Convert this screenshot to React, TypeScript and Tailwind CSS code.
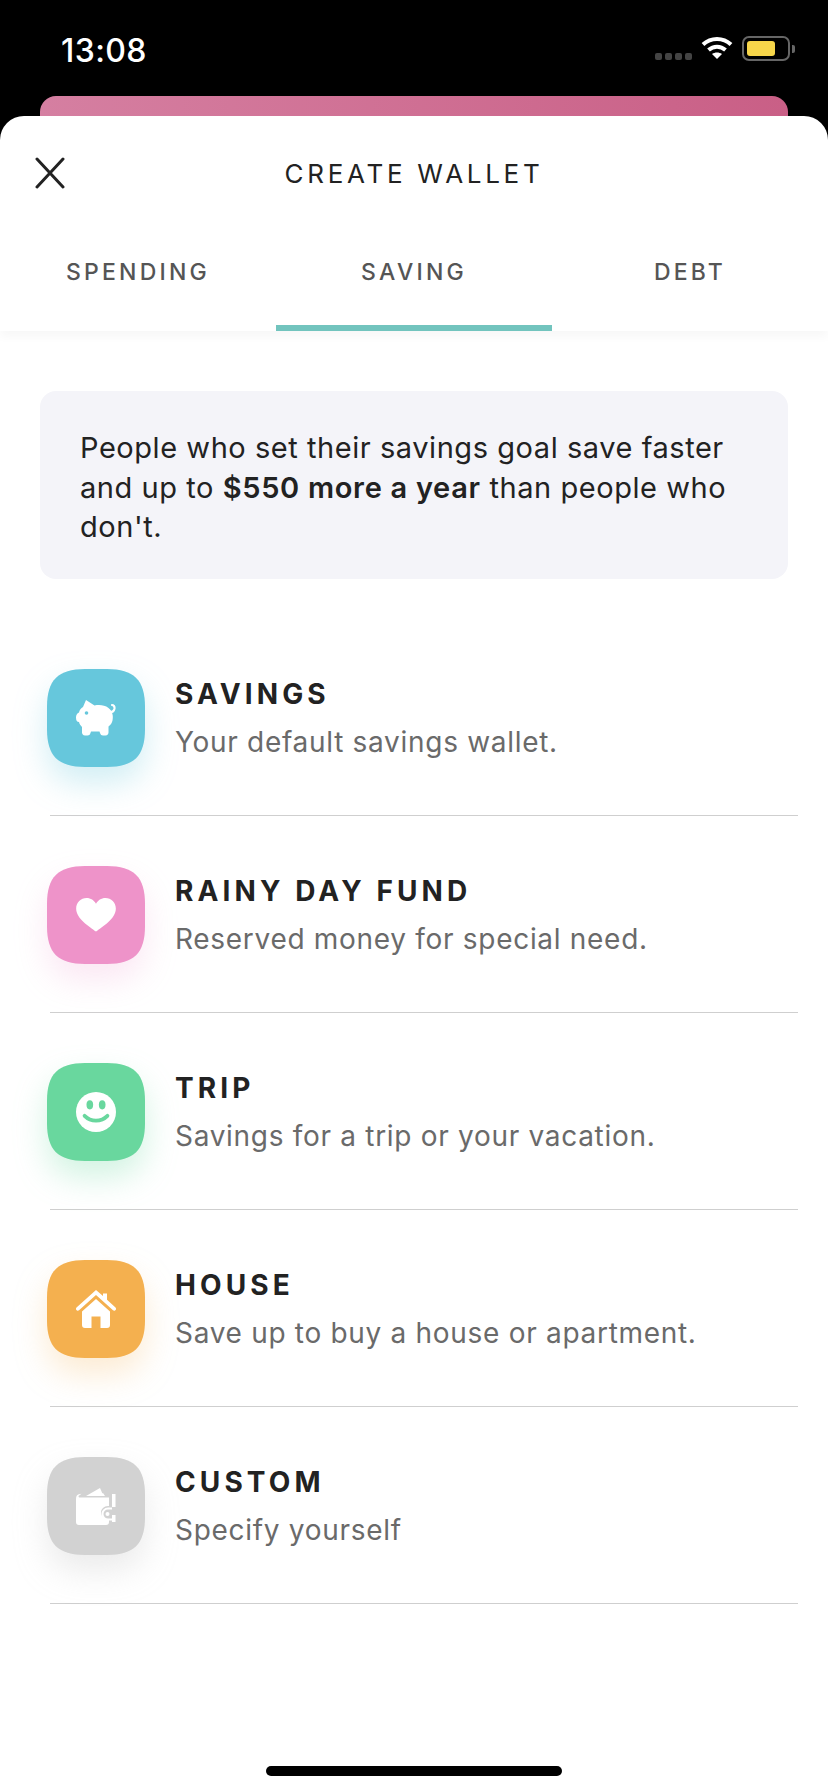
import { ReactNode } from 'react';

const PiggyIcon = () => (
  <svg width="40" height="36" viewBox="0 0 40 36" fill="white">
    <path d="M10 0l8.500 5.500c5-1 10-.5 14 2.500 4 3 5 8 4 12.500-.5 2.500-2 4.500-4 6v6c0 1.500-1 3-3 3h-2.500c-1.500 0-2.500-.8-3-2.500l-.5-1.500h-8.500l-.5 1.500c-.5 1.700-1.500 2.500-3 2.500H9c-2 0-3-1.500-3-3v-5.500c-1.500-1.500-2.500-3-3-5-2 0-3-1.500-3-4.500 0-2.500 1-4 3-5 .5-2.500 2-4.500 4-5.500z" />
    <path d="M33 12c3 .5 5-1 5.500-3.500.3-2-1-3.500-2.500-3.500" fill="none" stroke="white" strokeWidth="2.200" strokeLinecap="round" />
    <circle cx="10.500" cy="13" r="1.800" fill="#66c7dc" />
  </svg>
);

const HeartIcon = () => (
  <svg width="40" height="34" viewBox="0 0 42 36" fill="white">
    <path d="M21 35.500C14 30 0 22 0 11 0 4.500 5 0 11 0c4.500 0 8 2.500 10 6 2-3.500 5.500-6 10-6 6 0 11 4.500 11 11 0 11-14 19-21 24.500z" />
  </svg>
);

const SmileIcon = () => (
  <svg width="40" height="40" viewBox="0 0 42 42">
    <circle cx="21" cy="21" r="21" fill="white" />
    <ellipse cx="14.500" cy="13.500" rx="3.500" ry="4.800" fill="#69d79e" />
    <ellipse cx="27.500" cy="13.500" rx="3.500" ry="4.800" fill="#69d79e" />
    <path d="M9 25c3.500 3.500 8 5 12 5s8.500-1.500 12-5" fill="none" stroke="#69d79e" strokeWidth="4" strokeLinecap="round" />
  </svg>
);

const HouseIcon = () => (
  <svg width="40" height="38" viewBox="0 0 40 38" fill="white">
    <path d="M20 0l7 6V3.500h4v6.300l8.500 7.700c1 1 .5 2.500-.5 3-.8.400-1.500.2-2-.3L20 5 3 20.200c-.5.500-1.200.7-2 .3-1-.5-1.500-2-.5-3z" />
    <path d="M20 9l14 12.500V35c0 1.800-1 3-3 3h-6.500V26.500h-9V38H9c-2 0-3-1.200-3-3V21.500z" />
  </svg>
);

const WalletIcon = () => (
  <svg width="40" height="37" viewBox="0 0 40 37" fill="white">
    <path d="M10 8L24 0l3.500 8z" />
    <path d="M22 8l5-3 2 3z" />
    <path d="M0 11c0-3 1-4.500 4-5l1.500-.2-3 2.200c0 1 .5 1.500 1.500 1.500h29v8.500h-1c-4 0-7 3-7 6.500s3 6.500 7 6.500h1V34c0 2-1 3-3 3H3c-2 0-3-1-3-3z" />
    <path d="M36 6h3.500v13H36zM36 27h3.500v7H36z" />
    <path d="M32 19.500h4v2h-4c-2.500 0-4.500 2-4.500 4.500s2 4.500 4.500 4.500h4v2h-4c-3.500 0-6.500-3-6.500-6.500s3-6.500 6.500-6.500z" />
    <circle cx="31.500" cy="26" r="2" />
  </svg>
);

type Row = {
  title: string;
  desc: string;
  fill: string;
  shadow: string;
  icon: ReactNode;
};

const rows: Row[] = [
  { title: 'SAVINGS', desc: 'Your default savings wallet.', fill: 'fill-[#66c7dc]', shadow: 'drop-shadow-[0_16px_16px_rgba(102,199,220,0.3)]', icon: <PiggyIcon /> },
  { title: 'RAINY DAY FUND', desc: 'Reserved money for special need.', fill: 'fill-[#ee93c9]', shadow: 'drop-shadow-[0_16px_16px_rgba(238,147,201,0.22)]', icon: <HeartIcon /> },
  { title: 'TRIP', desc: 'Savings for a trip or your vacation.', fill: 'fill-[#69d79e]', shadow: 'drop-shadow-[0_16px_16px_rgba(105,215,158,0.3)]', icon: <SmileIcon /> },
  { title: 'HOUSE', desc: 'Save up to buy a house or apartment.', fill: 'fill-[#f4b04f]', shadow: 'drop-shadow-[0_16px_16px_rgba(244,176,79,0.25)]', icon: <HouseIcon /> },
  { title: 'CUSTOM', desc: 'Specify yourself', fill: 'fill-[#d2d2d2]', shadow: 'drop-shadow-[0_16px_16px_rgba(190,190,190,0.3)]', icon: <WalletIcon /> },
];

export default function App() {
  return (
    <div className="w-[828px] h-[1792px] bg-black overflow-hidden font-['Inter',sans-serif]">
      <div className="h-[96px] flex justify-between pl-[61px] pr-[33px] pt-[31px]">
        <span className="text-white text-[32px] leading-[40px] font-medium tracking-[0.4px]">13:08</span>
        <div className="flex items-start gap-[9px] pt-[5px]">
          <div className="flex gap-[3px] mt-[17px]">
            <span className="w-[7px] h-[7px] rounded-[2px] bg-[#444]" />
            <span className="w-[7px] h-[7px] rounded-[2px] bg-[#444]" />
            <span className="w-[7px] h-[7px] rounded-[2px] bg-[#444]" />
            <span className="w-[7px] h-[7px] rounded-[2px] bg-[#444]" />
          </div>
          <svg width="32" height="24" viewBox="0 0 32 24" fill="none" stroke="white" strokeWidth="4">
            <path d="M2 8.500C10 1 22 1 30 8.500" />
            <path d="M7.500 14C12.500 9.500 19.500 9.500 24.500 14" />
            <path d="M16 23l-5-5c3-2 7-2 10 0z" fill="white" stroke="none" />
          </svg>
          <div className="flex items-center gap-[2px]">
            <div className="w-[48px] h-[25px] rounded-[7px] border-2 border-[#666] p-[3px]">
              <div className="w-[28px] h-full rounded-[3px] bg-[#f7d64a]" />
            </div>
            <span className="w-[3px] h-[8px] rounded-r-[2px] bg-[#666]" />
          </div>
        </div>
      </div>

      <div className="mx-[40px] h-[40px] rounded-t-[16px] bg-linear-to-r from-[#d57fa1] to-[#c95f86]" />

      <div className="relative -mt-[20px] h-[1676px] bg-white rounded-t-[24px] flex flex-col">
        <div className="h-[215px] shrink-0 flex flex-col rounded-t-[24px] shadow-[0_6px_10px_rgba(0,0,0,0.03)]">
          <div className="relative h-[97px] flex items-center justify-center pt-[18px]">
            <svg className="absolute left-[34px] top-[41px]" width="32" height="32" viewBox="0 0 32 32" fill="none" stroke="#222" strokeWidth="3" strokeLinecap="round">
              <path d="M3 2l26 28M29 2L3 30" />
            </svg>
            <span className="text-[26px] leading-[32px] tracking-[3.700px] text-[#222]">CREATE WALLET</span>
          </div>
          <div className="flex-1 grid grid-cols-3 text-[23px] tracking-[3.200px] text-[#555] font-medium">
            <div className="flex items-start justify-center pt-[42px]">SPENDING</div>
            <div className="flex items-start justify-center pt-[42px] border-b-[6px] border-[#72c4be]">SAVING</div>
            <div className="flex items-start justify-center pt-[42px]">DEBT</div>
          </div>
        </div>

        <div className="mx-[40px] mt-[60px] h-[188px] rounded-[16px] bg-[#f4f4f9] px-[40px] pt-[37px] text-[29px] leading-[39.500px] tracking-[0.55px] text-[#222]">
          People who set their savings goal save faster and up to <b className="font-semibold tracking-[0.7px]">$550 more a year</b> than people who don't.
        </div>

        <div className="mt-[40px] pl-[50px] pr-[30px]">
          {rows.map((row) => (
            <div key={row.title} className="flex h-[197px] border-b border-[#cfcfcf] pt-[50px]">
              <div className={`relative w-[98px] h-[98px] -ml-[3px] shrink-0 flex items-center justify-center ${row.shadow}`}>
                <svg className="absolute inset-0" width="98" height="98" viewBox="0 0 98 98">
                  <path className={row.fill} d="M38 0H60C87 0 98 11 98 38V60C98 87 87 98 60 98H38C11 98 0 87 0 60V38C0 11 11 0 38 0z" />
                </svg>
                <div className="relative flex">{row.icon}</div>
              </div>
              <div className="ml-[30px] pt-[7px]">
                <div className="text-[28px] leading-[36px] font-bold tracking-[4.100px] text-[#222]">{row.title}</div>
                <div className="mt-[12px] text-[28px] leading-[36px] tracking-[0.7px] text-[#6a6a6a]">{row.desc}</div>
              </div>
            </div>
          ))}
        </div>

        <div className="mt-auto mb-[16px] mx-auto w-[296px] h-[10px] rounded-full bg-black" />
      </div>
    </div>
  );
}
